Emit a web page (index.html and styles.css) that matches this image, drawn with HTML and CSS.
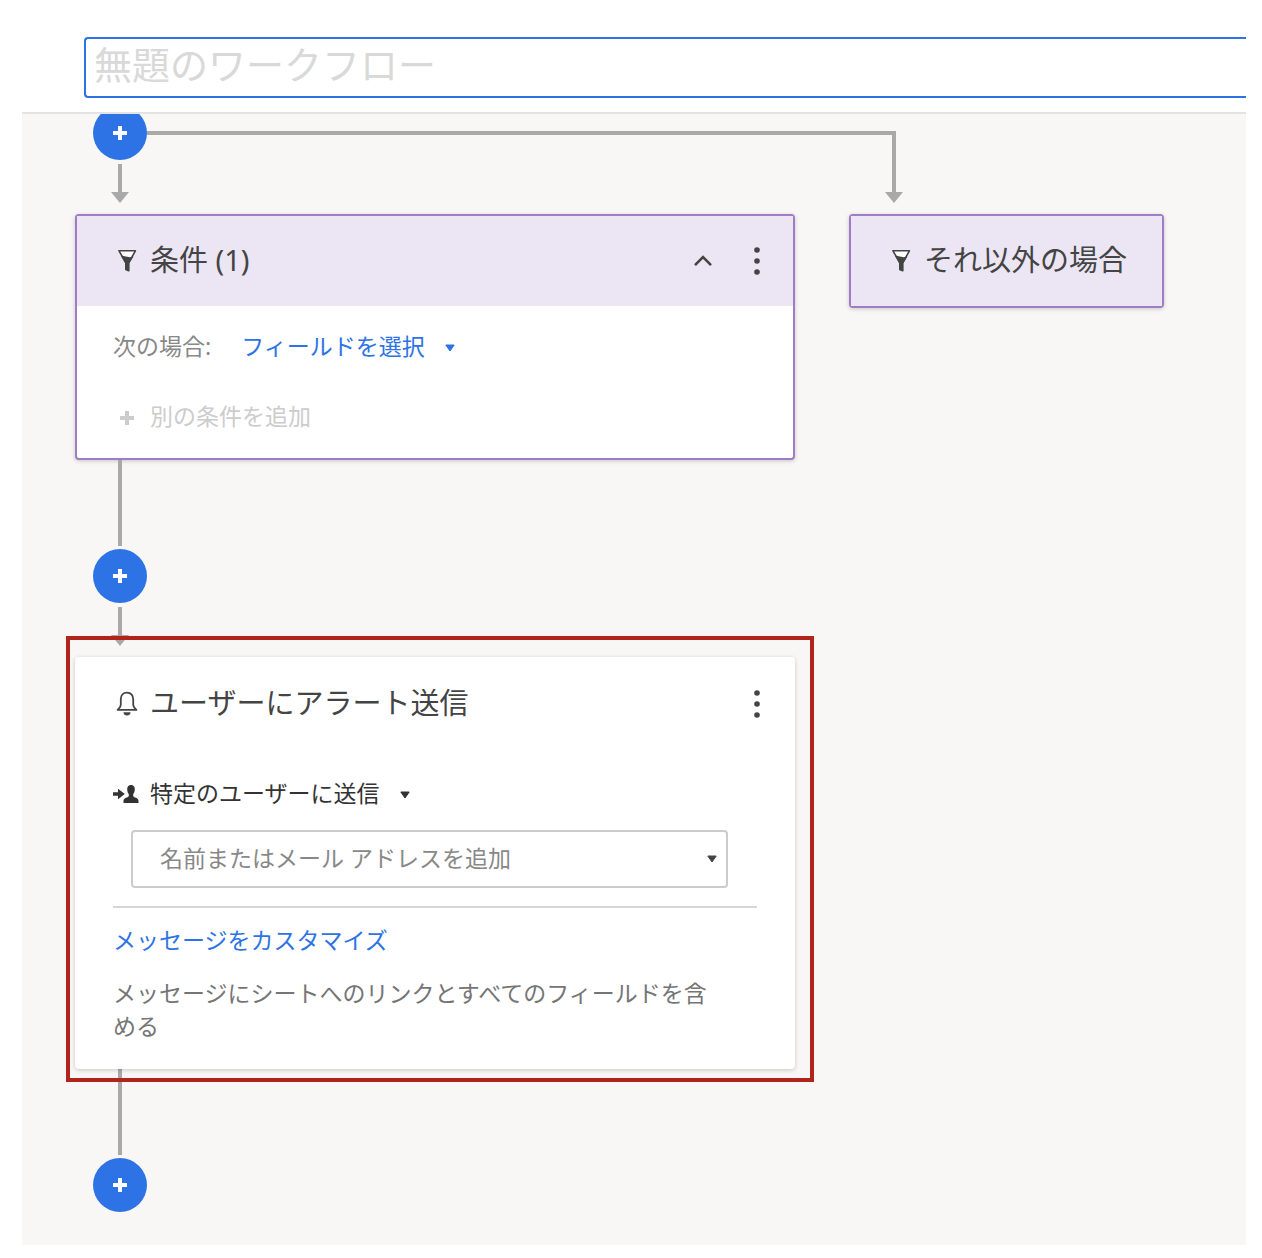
FILE: index.html
```html
<!DOCTYPE html>
<html lang="ja">
<head>
<meta charset="utf-8">
<meta name="viewport" content="width=device-width, initial-scale=1">
<title>無題のワークフロー</title>
<link rel="stylesheet" href="styles.css">
</head>
<body>
<svg class="sprite" aria-hidden="true">
  <symbol id="filter" viewBox="0 0 28 28">
    <path d="M6 3.800H22.400L16 14.500H12.500Z" fill="#fff"/>
    <path d="M8 9C11 8 14.500 11.500 20.500 9.500L16.200 16.500V24.300L12.400 22.500V16.500Z" fill="currentColor"/>
    <path d="M6 3.800H22.400L15.700 15.800V23.800L12.800 22.500V15.800Z" fill="none" stroke="currentColor" stroke-width="1.600" stroke-linejoin="round"/>
  </symbol>
  <symbol id="plus" viewBox="0 0 16 16">
    <path d="M8 1V15M1 8H15" fill="none" stroke="currentColor" stroke-width="4"/>
  </symbol>
  <symbol id="more" viewBox="0 0 24 30">
    <g fill="currentColor"><circle cx="12" cy="4" r="2.800"/><circle cx="12" cy="15" r="2.800"/><circle cx="12" cy="26" r="2.800"/></g>
  </symbol>
  <symbol id="caret" viewBox="0 0 10 8">
    <path d="M.8 1H9.200L5 7Z" fill="currentColor" stroke="currentColor" stroke-linejoin="round"/>
  </symbol>
</svg>
<div class="page">
  <header class="topbar">
    <input class="workflow-name" type="text" placeholder="無題のワークフロー" aria-label="ワークフロー名">
  </header>
  <main class="canvas">
    <section class="branch branch-main">
      <div class="fork">
        <button class="add-step" type="button" aria-label="ステップを追加"><svg class="add-icon"><use href="#plus"/></svg></button>
        <span class="fork-line"></span>
      </div>
      <div class="arrow"></div>
      <article class="card card-condition">
        <header class="card-head">
          <svg class="icon"><use href="#filter"/></svg>
          <h2 class="card-title">条件 (1)</h2>
          <button class="icon-button" type="button" aria-label="折りたたむ"><svg class="icon-chevron" viewBox="0 0 24 30"><path d="M4 19.200L12 11L20 19.200" fill="none" stroke="currentColor" stroke-width="2.600"/></svg></button>
          <button class="icon-button" type="button" aria-label="メニュー"><svg class="icon-more"><use href="#more"/></svg></button>
        </header>
        <div class="condition-body">
          <div class="condition-row">
            <label class="muted" for="field">次の場合:</label>
            <span class="picker picker-link">
              <select id="field" class="picker-select"><option>フィールドを選択</option></select>
              <svg class="caret"><use href="#caret"/></svg>
            </span>
          </div>
          <button class="add-condition" type="button" disabled>
            <span class="icon icon-slot"><svg class="add-icon"><use href="#plus"/></svg></span>別の条件を追加
          </button>
        </div>
      </article>
      <div class="line"></div>
      <button class="add-step" type="button" aria-label="ステップを追加"><svg class="add-icon"><use href="#plus"/></svg></button>
      <div class="arrow"></div>
      <div class="highlighted">
        <article class="card">
          <header class="card-head">
            <svg class="icon" viewBox="0 0 28 28"><path d="M14 2.600C9.800 2.600 7.800 5.800 7.800 9.300V14.800C7.800 17.300 6 18.300 4.600 19.900H23.400C22 18.300 20.200 17.300 20.200 14.800V9.300C20.200 5.800 18.200 2.600 14 2.600Z" fill="none" stroke="currentColor" stroke-width="1.800" stroke-linejoin="round"/><path d="M10.400 22.300H17.600C17.400 24.500 16 25.600 14 25.600S10.600 24.500 10.400 22.300Z" fill="currentColor"/></svg>
            <h2 class="card-title">ユーザーにアラート送信</h2>
            <button class="icon-button" type="button" aria-label="メニュー"><svg class="icon-more"><use href="#more"/></svg></button>
          </header>
          <div class="alert-body">
            <div class="recipient-row">
              <svg class="icon" viewBox="0 0 28 28"><path d="M0 13.200H5V9.800L11.800 15L5 20.200V16.800H0Z" fill="currentColor"/><path d="M18 6C20.600 6 21.800 7.700 21.800 10.200C21.800 12.600 21 14 20.200 15V17C20.500 18.800 25.500 18.500 25.500 22V24H10.500V22C10.500 18.500 15.500 18.800 15.800 17V15C15 14 14.200 12.600 14.200 10.200C14.200 7.700 15.400 6 18 6Z" fill="currentColor"/></svg>
              <span class="picker">
                <select class="picker-select" aria-label="送信先"><option>特定のユーザーに送信</option></select>
                <svg class="caret"><use href="#caret"/></svg>
              </span>
            </div>
            <div class="picker recipient-box">
              <input class="recipient-input" type="text" placeholder="名前またはメール アドレスを追加" aria-label="名前またはメール アドレス">
              <svg class="caret"><use href="#caret"/></svg>
            </div>
            <hr class="divider">
            <a class="customize" href="#message">メッセージをカスタマイズ</a>
            <p class="summary">メッセージにシートへのリンクとすべてのフィールドを含める</p>
          </div>
        </article>
      </div>
      <div class="line"></div>
      <button class="add-step" type="button" aria-label="ステップを追加"><svg class="add-icon"><use href="#plus"/></svg></button>
    </section>
    <section class="branch">
      <div class="elbow"></div>
      <article class="card card-condition">
        <header class="card-head">
          <svg class="icon"><use href="#filter"/></svg>
          <h2 class="card-title">それ以外の場合</h2>
        </header>
      </article>
    </section>
  </main>
</div>
</body>
</html>
```
FILE: styles.css
```css
* { box-sizing: border-box; }

body {
  margin: 0;
  background: #fff;
  color: #444;
  font: 23px/33px "Noto Sans", "Noto Sans CJK JP", sans-serif;
}

button, input, select { font: inherit; color: inherit; }
button { padding: 0; border: 0; background: none; cursor: pointer; }

.sprite { display: none; }
.page { padding: 0 16px 13px 22px; }

/* Title bar */
.topbar {
  padding: 37px 0 14px 62px;
  border-bottom: 2px solid #e3e3e3;
}
.workflow-name {
  display: block;
  width: 100%;
  height: 61px;
  padding: 0 8px 8px;
  border: 2px solid #2d73e5;
  border-right: 0;
  border-radius: 4px 0 0 4px;
  outline: 0;
  font-size: 38px;
}
.workflow-name::placeholder { color: #d9d9d9; opacity: 1; }

/* Canvas and its branches */
.canvas {
  display: flex;
  align-items: flex-start;
  gap: 54px;
  overflow: hidden;
  padding: 0 53px 33px;
  background: #f8f7f5;
}
.branch { flex: none; }
.branch-main {
  flex: 0 1 720px;
  min-width: 0;
  margin-top: -8px;
}

.fork { display: flex; align-items: center; }
.fork-line {
  flex: 1;
  height: 4px;
  margin-right: -54px;
  background: #a9a9a9;
}
.add-step {
  display: grid;
  place-items: center;
  width: 54px;
  height: 54px;
  margin-left: 18px;
  border-radius: 50%;
  background: #2d73e5;
  color: #fff;
}
.add-icon { width: 16px; height: 16px; }

.line {
  width: 4px;
  height: 86px;
  margin: 0 0 3px 43px;
  background: #a9a9a9;
}
.arrow {
  width: 18px;
  height: 39px;
  margin: 4px 0 11px 36px;
  background: #a9a9a9;
  clip-path: polygon(7px 0, 11px 0, 11px 28px, 18px 28px, 9px 100%, 0 28px, 7px 28px);
}
.elbow {
  width: 54px;
  height: 72px;
  margin: 17px 0 11px;
  background: #a9a9a9;
  clip-path: polygon(0 0, 47px 0, 47px 61px, 54px 61px, 45px 100%, 36px 61px, 43px 61px, 43px 4px, 0 4px);
}

/* Cards */
.card {
  border: 2px solid transparent;
  border-radius: 4px;
  background: #fff;
  box-shadow: 0 1px 4px rgba(0, 0, 0, .2);
}
.card-condition { border-color: #a07cc8; }
.card-head {
  display: flex;
  align-items: center;
  height: 90px;
  padding: 0 24px 0 36px;
}
.card-condition .card-head { background: #ece6f4; }
.branch:not(.branch-main) .card-head { padding-right: 35px; }
.card-title {
  flex: 1;
  margin: 0;
  padding-bottom: 4px;
  font-size: 29px;
  font-weight: 400;
  white-space: nowrap;
}
.icon {
  flex: none;
  width: 28px;
  height: 28px;
  margin-right: 9px;
}
.icon-slot { display: grid; place-items: center; padding-top: 4px; }
.icon-button { width: 24px; height: 30px; }
.icon-button + .icon-button { margin-left: 30px; }
.icon-more, .icon-chevron { display: block; width: 24px; height: 30px; }

.condition-body { padding: 20px 36px 22px; }
.condition-row {
  display: flex;
  align-items: center;
  gap: 30px;
  height: 40px;
  margin-bottom: 30px;
}
.muted { color: #888; }
.add-condition {
  display: flex;
  align-items: center;
  height: 40px;
  color: #ccc;
}

/* A field with a caret laid over its right end */
.picker { display: inline-grid; align-items: center; }
.picker > * { grid-area: 1 / 1; }
.picker-select {
  appearance: none;
  margin: 0;
  padding: 0 30px 0 0;
  border: 0;
  background: none;
}
.picker-link { color: #2d73e5; }
.caret {
  justify-self: end;
  width: 10px;
  height: 8px;
  pointer-events: none;
}
.picker-select + .caret { margin-top: 3px; }

/* Alert card */
.highlighted { position: relative; }
.highlighted::after {
  content: "";
  position: absolute;
  inset: -21px -19px -13px -9px;
  border: 4px solid #b0241c;
  pointer-events: none;
}
.alert-body { padding: 24px 36px; }
.recipient-row {
  display: flex;
  align-items: center;
  height: 40px;
  margin-bottom: 17px;
  color: #333;
}
.recipient-box { display: grid; margin: 0 29px 18px 18px; }
.recipient-input {
  width: 100%;
  height: 58px;
  padding: 0 40px 2px 27px;
  border: 2px solid #ccc;
  border-radius: 4px;
  background: #fff;
}
.recipient-input::placeholder { color: #888; opacity: 1; }
.recipient-box .caret { margin-right: 11px; }
.divider {
  margin: 0 0 16px;
  border: 0;
  border-top: 2px solid #d6d6d6;
}
.customize {
  display: block;
  margin-bottom: 20px;
  color: #2d73e5;
  text-decoration: none;
}
.summary {
  margin: 0 29px 0 0;
  color: #757575;
}
```
